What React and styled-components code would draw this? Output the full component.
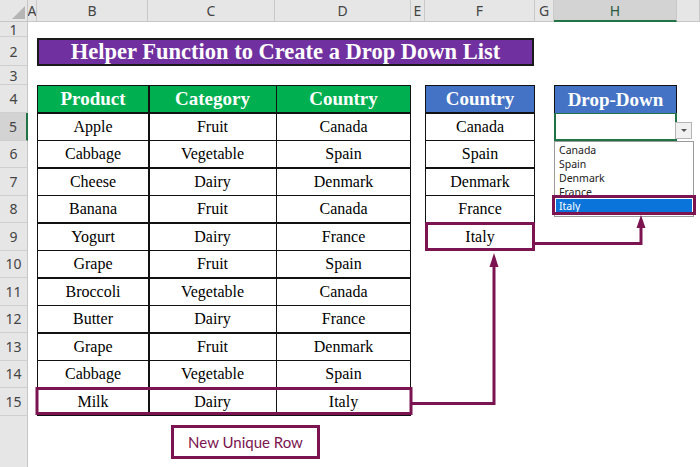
import React from "react";
import styled, { createGlobalStyle } from "styled-components";

const Global = createGlobalStyle`
  html, body { margin: 0; padding: 0; background: #fff; }
  body { width: 700px; height: 467px; overflow: hidden; }
`;

const MAROON = "#7b1450";
const SERIF = `"Liberation Serif", Tinos, "Times New Roman", Times, serif`;

const Sheet = styled.div`
  position: relative;
  width: 700px;
  height: 467px;
  display: grid;
  grid-template-columns: 28px 9px 111px 127px 136px 14px 110px 19px 123px 1fr;
  grid-template-rows: 22px 15px 29px 19px 28px repeat(11, 27.5px) 1fr;
  background: #fff;
  overflow: hidden;
`;

const Corner = styled.div`
  grid-column: 1;
  grid-row: 1;
  position: relative;
  background: #e6e6e6;
  border-right: 1px solid #c6c6c6;
  border-bottom: 1px solid #c6c6c6;
  box-sizing: border-box;
  &::after {
    content: "";
    position: absolute;
    right: 2px;
    bottom: 2px;
    border-left: 13px solid transparent;
    border-bottom: 13px solid #b5b5b5;
  }
`;

const ColHead = styled.div`
  grid-column: ${(p) => p.$col};
  grid-row: 1;
  box-sizing: border-box;
  display: flex;
  align-items: center;
  justify-content: center;
  font-family: "Noto Sans", "DejaVu Sans", sans-serif;
  font-size: 14px;
  color: ${(p) => (p.$active ? "#2a5a3e" : "#444")};
  background: ${(p) => (p.$active ? "#d3d3d3" : "#e6e6e6")};
  border-right: 1px solid #c9c9c9;
  border-bottom: ${(p) => (p.$active ? "2px solid #217346" : "1px solid #c6c6c6")};
  overflow: hidden;
`;

const RowHead = styled.div`
  grid-column: 1;
  grid-row: ${(p) => p.$row};
  box-sizing: border-box;
  display: flex;
  align-items: center;
  justify-content: center;
  font-family: "Noto Sans", "DejaVu Sans", sans-serif;
  font-size: 14px;
  color: #444;
  background: ${(p) => (p.$active ? "#d3d3d3" : "#e6e6e6")};
  border-bottom: ${(p) => (p.$blank ? "none" : "1px solid #cfcfcf")};
  border-right: ${(p) => (p.$active ? "2px solid #217346" : "1px solid #c6c6c6")};
`;

const Title = styled.div`
  grid-column: 3 / 8;
  grid-row: 3;
  box-sizing: border-box;
  margin: 1px 1px 0 0;
  background: #7030a0;
  border: 2px solid #1a1a1a;
  color: #fff;
  display: flex;
  align-items: center;
  justify-content: center;
  font-family: ${SERIF};
  font-weight: bold;
  font-size: 22.5px;
`;

const DataTable = styled.div`
  grid-column: ${(p) => p.$cols};
  grid-row: ${(p) => p.$rows};
  display: grid;
  grid-template-columns: ${(p) => p.$template};
  grid-template-rows: ${(p) => p.$rowTemplate};
  gap: 1.5px;
  background: #111;
  border: 1.5px solid #111;
  box-sizing: border-box;
`;

const HeadCell = styled.div`
  background: ${(p) => p.$bg};
  color: #fff;
  display: flex;
  align-items: center;
  justify-content: center;
  font-family: ${SERIF};
  font-weight: bold;
  font-size: 19px;
`;

const BodyCell = styled.div`
  background: #fff;
  color: #000;
  display: flex;
  align-items: center;
  justify-content: center;
  font-family: ${SERIF};
  font-weight: normal;
  font-size: 16px;
`;

const DropHeader = styled.div`
  grid-column: 9;
  grid-row: 5;
  background: #4472c4;
  border: 1.5px solid #111;
  border-bottom: none;
  box-sizing: border-box;
  color: #fff;
  display: flex;
  align-items: center;
  justify-content: center;
  font-family: ${SERIF};
  font-weight: bold;
  font-size: 19px;
`;

const ActiveCell = styled.div`
  grid-column: 9;
  grid-row: 6;
  position: relative;
  border: 2px solid #217346;
  border-top-width: 1px;
  box-sizing: border-box;
  background: #fff;
`;

const DropButton = styled.div`
  position: absolute;
  left: 100%;
  top: 8px;
  width: 17px;
  height: 17px;
  background: #f1f1f1;
  border: 1px solid #b4b4b4;
  box-sizing: border-box;
  display: flex;
  align-items: center;
  justify-content: center;
  &::after {
    content: "";
    border-left: 3px solid transparent;
    border-right: 3px solid transparent;
    border-top: 3px solid #555;
  }
`;

const DropList = styled.ul`
  position: absolute;
  left: 554px;
  top: 141px;
  width: 140px;
  margin: 0;
  padding: 1px 1px 3px;
  list-style: none;
  background: #fff;
  border: 1px solid #9a9a9a;
  box-sizing: border-box;
  font-family: "Noto Sans", "DejaVu Sans", sans-serif;
  font-size: 10.5px;
  z-index: 2;
`;

const DropItem = styled.li`
  height: 14px;
  line-height: 14px;
  padding-left: 3px;
  color: ${(p) => (p.$selected ? "#fff" : "#222")};
  background: ${(p) => (p.$selected ? "#0a74da" : "transparent")};
`;

const Overlay = styled.svg`
  position: absolute;
  left: 0;
  top: 0;
  width: 700px;
  height: 467px;
  pointer-events: none;
  z-index: 3;
`;

const Callout = styled.div`
  position: absolute;
  left: 171px;
  top: 425px;
  width: 149px;
  height: 34px;
  box-sizing: border-box;
  border: 3px solid ${MAROON};
  background: #fff;
  color: ${MAROON};
  display: flex;
  align-items: center;
  justify-content: center;
  font-family: Lato, "Open Sans", sans-serif;
  font-size: 15px;
  z-index: 3;
`;

const products = [
  ["Apple", "Fruit", "Canada"],
  ["Cabbage", "Vegetable", "Spain"],
  ["Cheese", "Dairy", "Denmark"],
  ["Banana", "Fruit", "Canada"],
  ["Yogurt", "Dairy", "France"],
  ["Grape", "Fruit", "Spain"],
  ["Broccoli", "Vegetable", "Canada"],
  ["Butter", "Dairy", "France"],
  ["Grape", "Fruit", "Denmark"],
  ["Cabbage", "Vegetable", "Spain"],
  ["Milk", "Dairy", "Italy"],
];

const countries = ["Canada", "Spain", "Denmark", "France", "Italy"];
const cols = ["A", "B", "C", "D", "E", "F", "G", "H", ""];

export default function App() {
  return (
    <>
      <Global />
      <Sheet>
        <Corner />
        {cols.map((c, i) => (
          <ColHead key={i} $col={i + 2} $active={c === "H"}>
            {c}
          </ColHead>
        ))}
        {Array.from({ length: 15 }, (_, i) => (
          <RowHead key={i} $row={i + 2} $active={i + 1 === 5}>
            {i + 1}
          </RowHead>
        ))}
        <RowHead $row={17} $blank />

        <Title>Helper Function to Create a Drop Down List</Title>

        <DataTable
          $cols="3 / 6"
          $rows="5 / 17"
          $template="110px 126px 1fr"
          $rowTemplate="repeat(12, 1fr)"
        >
          <HeadCell $bg="#00b050">Product</HeadCell>
          <HeadCell $bg="#00b050">Category</HeadCell>
          <HeadCell $bg="#00b050">Country</HeadCell>
          {products.map((r, i) =>
            r.map((v, j) => <BodyCell key={`${i}-${j}`}>{v}</BodyCell>)
          )}
        </DataTable>

        <DataTable
          $cols="7"
          $rows="5 / 11"
          $template="1fr"
          $rowTemplate="repeat(6, 1fr)"
        >
          <HeadCell $bg="#4472c4">Country</HeadCell>
          {countries.map((c) => (
            <BodyCell key={c}>{c}</BodyCell>
          ))}
        </DataTable>

        <DropHeader>Drop-Down</DropHeader>
        <ActiveCell>
          <DropButton />
        </ActiveCell>

        <DropList>
          {countries.map((c) => (
            <DropItem key={c} $selected={c === "Italy"}>
              {c}
            </DropItem>
          ))}
        </DropList>

        <Overlay viewBox="0 0 700 467">
          <g fill="none" stroke={MAROON} strokeWidth="3">
            <rect x="37" y="388.5" width="374" height="25" />
            <rect x="426.5" y="223.5" width="107" height="26" />
            <rect x="553.5" y="196.5" width="141" height="17" />
            <polyline points="412,403.5 494,403.5 494,264" />
            <polyline points="535,243.5 641,243.5 641,226" />
          </g>
          <g fill={MAROON}>
            <polygon points="494,253 489.5,267 498.5,267" />
            <polygon points="641,215 636.5,228 645.5,228" />
          </g>
        </Overlay>

        <Callout>New Unique Row</Callout>
      </Sheet>
    </>
  );
}
